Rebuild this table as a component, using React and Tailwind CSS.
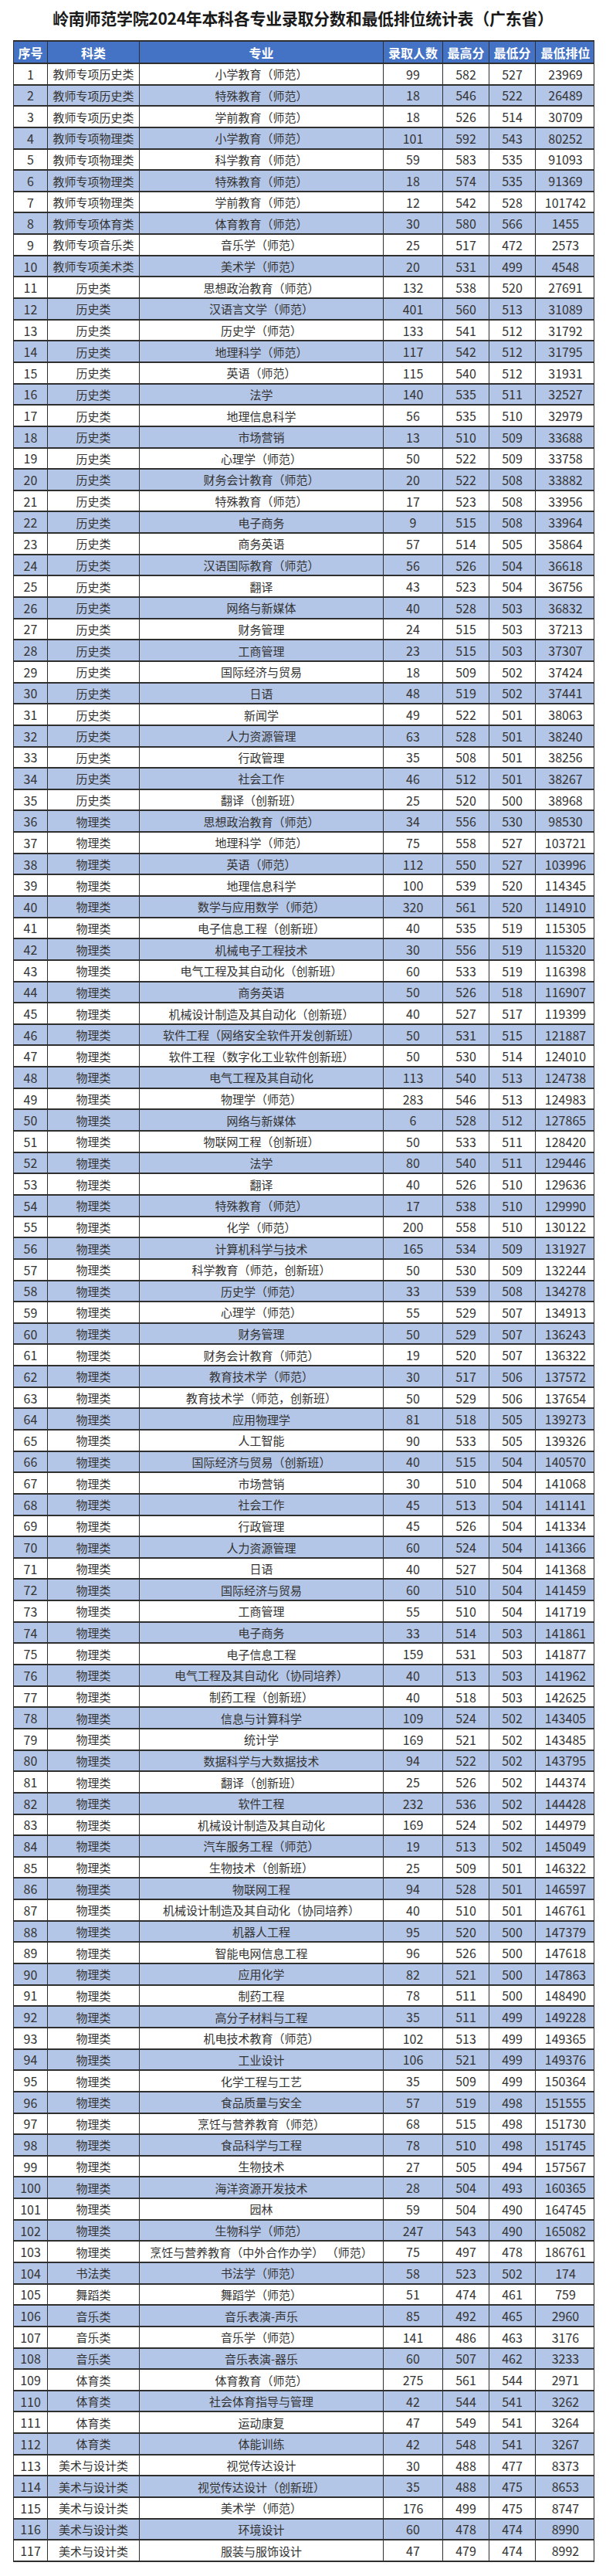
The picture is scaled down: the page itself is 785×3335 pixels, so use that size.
import React from 'react';

const raw = `1|教师专项历史类|小学教育（师范）|99|582|527|23969
2|教师专项历史类|特殊教育（师范）|18|546|522|26489
3|教师专项历史类|学前教育（师范）|18|526|514|30709
4|教师专项物理类|小学教育（师范）|101|592|543|80252
5|教师专项物理类|科学教育（师范）|59|583|535|91093
6|教师专项物理类|特殊教育（师范）|18|574|535|91369
7|教师专项物理类|学前教育（师范）|12|542|528|101742
8|教师专项体育类|体育教育（师范）|30|580|566|1455
9|教师专项音乐类|音乐学（师范）|25|517|472|2573
10|教师专项美术类|美术学（师范）|20|531|499|4548
11|历史类|思想政治教育（师范）|132|538|520|27691
12|历史类|汉语言文学（师范）|401|560|513|31089
13|历史类|历史学（师范）|133|541|512|31792
14|历史类|地理科学（师范）|117|542|512|31795
15|历史类|英语（师范）|115|540|512|31931
16|历史类|法学|140|535|511|32527
17|历史类|地理信息科学|56|535|510|32979
18|历史类|市场营销|13|510|509|33688
19|历史类|心理学（师范）|50|522|509|33758
20|历史类|财务会计教育（师范）|20|522|508|33882
21|历史类|特殊教育（师范）|17|523|508|33956
22|历史类|电子商务|9|515|508|33964
23|历史类|商务英语|57|514|505|35864
24|历史类|汉语国际教育（师范）|56|526|504|36618
25|历史类|翻译|43|523|504|36756
26|历史类|网络与新媒体|40|528|503|36832
27|历史类|财务管理|24|515|503|37213
28|历史类|工商管理|23|515|503|37307
29|历史类|国际经济与贸易|18|509|502|37424
30|历史类|日语|48|519|502|37441
31|历史类|新闻学|49|522|501|38063
32|历史类|人力资源管理|63|528|501|38240
33|历史类|行政管理|35|508|501|38256
34|历史类|社会工作|46|512|501|38267
35|历史类|翻译（创新班）|25|520|500|38968
36|物理类|思想政治教育（师范）|34|556|530|98530
37|物理类|地理科学（师范）|75|558|527|103721
38|物理类|英语（师范）|112|550|527|103996
39|物理类|地理信息科学|100|539|520|114345
40|物理类|数学与应用数学（师范）|320|561|520|114910
41|物理类|电子信息工程（创新班）|40|535|519|115305
42|物理类|机械电子工程技术|30|556|519|115320
43|物理类|电气工程及其自动化（创新班）|60|533|519|116398
44|物理类|商务英语|50|526|518|116907
45|物理类|机械设计制造及其自动化（创新班）|40|527|517|119399
46|物理类|软件工程（网络安全软件开发创新班）|50|531|515|121887
47|物理类|软件工程（数字化工业软件创新班）|50|530|514|124010
48|物理类|电气工程及其自动化|113|540|513|124738
49|物理类|物理学（师范）|283|546|513|124983
50|物理类|网络与新媒体|6|528|512|127865
51|物理类|物联网工程（创新班）|50|533|511|128420
52|物理类|法学|80|540|511|129446
53|物理类|翻译|40|526|510|129636
54|物理类|特殊教育（师范）|17|538|510|129990
55|物理类|化学（师范）|200|558|510|130122
56|物理类|计算机科学与技术|165|534|509|131927
57|物理类|科学教育（师范，创新班）|50|530|509|132244
58|物理类|历史学（师范）|33|539|508|134278
59|物理类|心理学（师范）|55|529|507|134913
60|物理类|财务管理|50|529|507|136243
61|物理类|财务会计教育（师范）|19|520|507|136322
62|物理类|教育技术学（师范）|30|517|506|137572
63|物理类|教育技术学（师范，创新班）|50|529|506|137654
64|物理类|应用物理学|81|518|505|139273
65|物理类|人工智能|90|533|505|139326
66|物理类|国际经济与贸易（创新班）|40|515|504|140570
67|物理类|市场营销|30|510|504|141068
68|物理类|社会工作|45|513|504|141141
69|物理类|行政管理|45|526|504|141334
70|物理类|人力资源管理|60|524|504|141366
71|物理类|日语|40|527|504|141368
72|物理类|国际经济与贸易|60|510|504|141459
73|物理类|工商管理|55|510|504|141719
74|物理类|电子商务|33|514|503|141861
75|物理类|电子信息工程|159|531|503|141877
76|物理类|电气工程及其自动化（协同培养）|40|513|503|141962
77|物理类|制药工程（创新班）|40|518|503|142625
78|物理类|信息与计算科学|109|524|502|143405
79|物理类|统计学|169|521|502|143485
80|物理类|数据科学与大数据技术|94|522|502|143795
81|物理类|翻译（创新班）|25|526|502|144374
82|物理类|软件工程|232|536|502|144428
83|物理类|机械设计制造及其自动化|169|524|502|144979
84|物理类|汽车服务工程（师范）|19|513|502|145049
85|物理类|生物技术（创新班）|25|509|501|146322
86|物理类|物联网工程|94|528|501|146597
87|物理类|机械设计制造及其自动化（协同培养）|40|510|501|146761
88|物理类|机器人工程|95|520|500|147379
89|物理类|智能电网信息工程|96|526|500|147618
90|物理类|应用化学|82|521|500|147863
91|物理类|制药工程|78|511|500|148490
92|物理类|高分子材料与工程|35|511|499|149228
93|物理类|机电技术教育（师范）|102|513|499|149365
94|物理类|工业设计|106|521|499|149376
95|物理类|化学工程与工艺|35|509|499|150364
96|物理类|食品质量与安全|57|519|498|151555
97|物理类|烹饪与营养教育（师范）|68|515|498|151730
98|物理类|食品科学与工程|78|510|498|151745
99|物理类|生物技术|27|505|494|157567
100|物理类|海洋资源开发技术|28|504|493|160365
101|物理类|园林|59|504|490|164745
102|物理类|生物科学（师范）|247|543|490|165082
103|物理类|烹饪与营养教育（中外合作办学） （师范）|75|497|478|186761
104|书法类|书法学（师范）|58|523|502|174
105|舞蹈类|舞蹈学（师范）|51|474|461|759
106|音乐类|音乐表演-声乐|85|492|465|2960
107|音乐类|音乐学（师范）|141|486|463|3176
108|音乐类|音乐表演-器乐|60|507|462|3233
109|体育类|体育教育（师范）|275|561|544|2971
110|体育类|社会体育指导与管理|42|544|541|3262
111|体育类|运动康复|47|549|541|3264
112|体育类|体能训练|42|548|541|3267
113|美术与设计类|视觉传达设计|30|488|477|8373
114|美术与设计类|视觉传达设计（创新班）|35|488|475|8653
115|美术与设计类|美术学（师范）|176|499|475|8747
116|美术与设计类|环境设计|60|478|474|8990
117|美术与设计类|服装与服饰设计|47|479|474|8992`;

const rows = raw.split('\n').map((line) => line.split('|'));

const cols = 'grid grid-cols-[44px_119px_316px_77px_60px_60px_77px]';

function App() {
  return (
    <div className="w-[785px] bg-white pb-[17px] font-['Noto_Sans_CJK_SC','Noto_Sans',sans-serif] text-[#333]">
      {/* Title */}
      <div className="h-[52px] flex items-center justify-center pb-1">
        <h1 className="text-[21px] font-bold text-[#1a1a1a] tracking-[-0.3px]">
          岭南师范学院2024年本科各专业录取分数和最低排位统计表（广东省）
        </h1>
      </div>

      <div className="ml-[17px] w-[753px] border-l border-r border-[#2f2f2f]">
        {/* Header */}
        <div className={`${cols} h-[31px] bg-[#4472c4] text-white font-bold border-t-2 border-b-2 border-[#2f2f2f]`}>
          <div className="flex items-center justify-center border-r border-[#2f2f2f] text-[16px]">序号</div>
          <div className="flex items-center justify-center border-r border-[#2f2f2f] text-[16px]">科类</div>
          <div className="flex items-center justify-center border-r border-[#2f2f2f] text-[16px]">专业</div>
          <div className="flex items-center justify-center border-r border-[#2f2f2f] text-[16px]">录取人数</div>
          <div className="flex items-center justify-center border-r border-[#2f2f2f] text-[16px]">最高分</div>
          <div className="flex items-center justify-center border-r border-[#2f2f2f] text-[16px]">最低分</div>
          <div className="flex items-center justify-center text-[16px]">最低排位</div>
        </div>

        {/* Body */}
        {rows.map((r) => (
          <div
            key={r[0]}
            className={`${cols} h-[27.65px] border-b-2 border-[#2f2f2f] leading-none ${
              Number(r[0]) % 2 === 0 ? 'bg-[#b4c6e7]' : 'bg-white'
            }`}
          >
            <div className="flex items-center justify-center border-r border-[#2f2f2f] text-[16px]">{r[0]}</div>
            <div className="flex items-center justify-center border-r border-[#2f2f2f] text-[15px]">{r[1]}</div>
            <div className="flex items-center justify-center border-r border-[#2f2f2f] text-[15px] whitespace-pre">{r[2]}</div>
            <div className="flex items-center justify-center border-r border-[#2f2f2f] text-[16px]">{r[3]}</div>
            <div className="flex items-center justify-center border-r border-[#2f2f2f] text-[16px]">{r[4]}</div>
            <div className="flex items-center justify-center border-r border-[#2f2f2f] text-[16px]">{r[5]}</div>
            <div className="flex items-center justify-center text-[16px]">{r[6]}</div>
          </div>
        ))}
      </div>
    </div>
  );
}

export default App;
